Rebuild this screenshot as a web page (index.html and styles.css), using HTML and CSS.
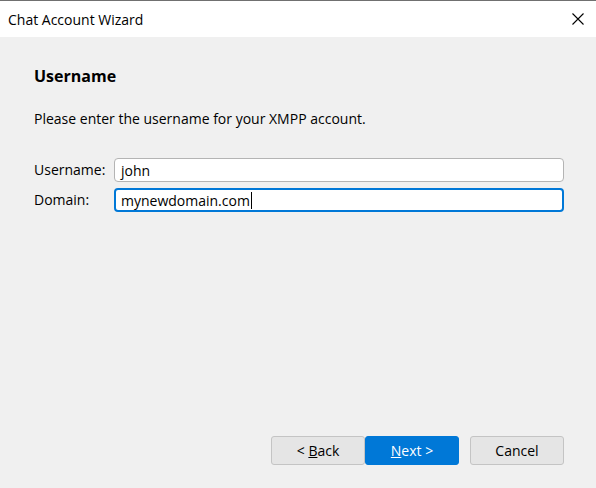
FILE: index.html
```html
<!DOCTYPE html>
<html>
<head>
<meta charset="utf-8">
<link rel="stylesheet" href="styles.css">
</head>
<body>
<div class="window">
  <div class="titlebar">
    <span class="title">Chat Account Wizard</span>
    <svg class="close" width="12" height="12" viewBox="0 0 12 12"><path d="M0.5 0.5 L11.5 11.5 M11.5 0.5 L0.5 11.5" stroke="#000" stroke-width="1.1" fill="none"/></svg>
  </div>
  <div class="content">
    <h1 class="heading">Username</h1>
    <p class="desc">Please enter the username for your XMPP account.</p>
    <div class="form">
      <label class="label">Username:</label>
      <div class="field"><span class="value">john</span></div>
      <label class="label">Domain:</label>
      <div class="field focused"><span class="value">mynewdomain.com</span><span class="caret"></span></div>
    </div>
  </div>
  <div class="footer">
    <div class="nav">
      <button class="btn">&lt; <u>B</u>ack</button>
      <button class="btn primary"><u>N</u>ext &gt;</button>
    </div>
    <button class="btn">Cancel</button>
  </div>
</div>
</body>
</html>
```
FILE: styles.css
```css
html, body {
  margin: 0;
  padding: 0;
}
body {
  width: 596px;
  height: 488px;
  overflow: hidden;
  font-family: "Open Sans", "Noto Sans", sans-serif;
  font-size: 14px;
  color: #000;
}
.window {
  width: 596px;
  height: 488px;
  display: flex;
  flex-direction: column;
  background: #f0f0f0;
  border-top: 1px solid #707070;
  box-sizing: border-box;
}
.titlebar {
  height: 36px;
  background: #fff;
  display: flex;
  align-items: center;
  justify-content: space-between;
  padding: 0 12px 0 8px;
}
.title {
  font-size: 14px;
}
.close {
  display: block;
}
.content {
  flex: 1;
  padding: 28px 32px 0 34px;
}
.heading {
  margin: 0;
  font-size: 16px;
  font-weight: 700;
  line-height: 22px;
}
.desc {
  margin: 22px 0 0;
  line-height: 20px;
}
.form {
  margin-top: 29px;
  display: grid;
  grid-template-columns: 80px 1fr;
  row-gap: 6px;
  align-items: center;
}
.label {
  line-height: 20px;
}
.field {
  height: 24px;
  box-sizing: border-box;
  background: #fff;
  border: 1px solid #b4b4b4;
  border-radius: 4px;
  display: flex;
  align-items: center;
  padding: 0 6px;
}
.field.focused {
  border: 2px solid #0078d7;
  padding: 0 5px;
}
.caret {
  width: 1px;
  height: 17px;
  background: #000;
  margin-left: 1px;
}
.footer {
  height: 52px;
  padding: 0 32px 0 271px;
  display: flex;
  align-items: flex-start;
  justify-content: space-between;
}
.nav {
  display: flex;
}
.btn {
  width: 94px;
  height: 29px;
  box-sizing: border-box;
  font-family: inherit;
  font-size: 14px;
  color: #000;
  background: #e5e5e5;
  border: 1px solid #c4c4c4;
  border-radius: 3px;
  padding: 0;
}
.btn.primary {
  background: #0078d7;
  border-color: #0078d7;
  color: #fff;
}
```
